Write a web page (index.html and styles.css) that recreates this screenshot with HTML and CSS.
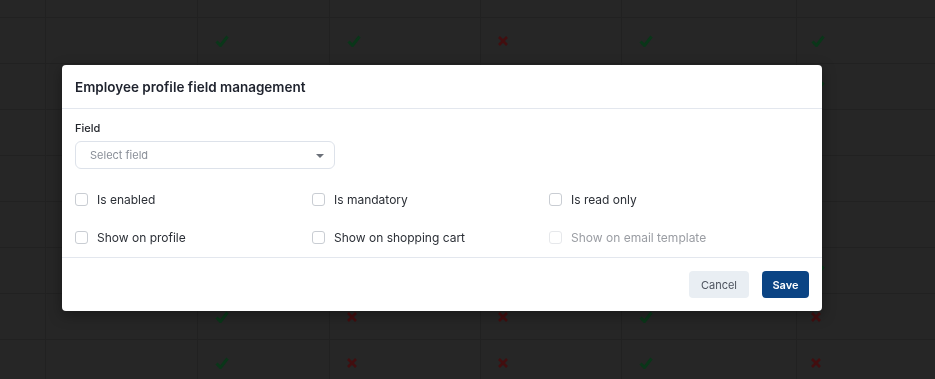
FILE: index.html
```html
<!DOCTYPE html>
<html lang="en">
<head>
    <meta charset="UTF-8">
    <meta name="viewport" content="width=device-width, initial-scale=1.0">
    <title>Employee profile field management</title>
    <link rel="stylesheet" href="styles.css">
</head>
<body>

    <div class="table" id="table">
        <div class="row head">
            <div class="cell c0"></div><div class="cell c1"></div><div class="cell c2"></div><div class="cell c3"></div><div class="cell c4"></div><div class="cell c5"></div><div class="cell c6"></div>
        </div>
    </div>

    <div class="overlay">
        <div class="modal">
            <div class="modal-header">
                <h2>Employee profile field management</h2>
            </div>
            <div class="modal-body">
                <label class="field-label">Field</label>
                <div class="select">
                    <span class="placeholder">Select field</span>
                    <span class="caret"></span>
                </div>
                <div class="options">
                    <label class="option"><span class="box"></span>Is enabled</label>
                    <label class="option"><span class="box"></span>Is mandatory</label>
                    <label class="option"><span class="box"></span>Is read only</label>
                    <label class="option"><span class="box"></span>Show on profile</label>
                    <label class="option"><span class="box"></span>Show on shopping cart</label>
                    <label class="option disabled"><span class="box"></span>Show on email template</label>
                </div>
            </div>
            <div class="modal-footer">
                <button class="btn btn-cancel">Cancel</button>
                <button class="btn btn-save">Save</button>
            </div>
        </div>
    </div>

    <script>
        // 1 = allowed, 0 = not allowed
        const rows = [
            [1, 1, 0, 1, 1],
            [1, 0, 0, 1, 1],
            [1, 0, 0, 1, 0],
            [1, 0, 0, 1, 0],
            [1, 0, 0, 1, 0],
            [1, 0, 0, 1, 1],
            [1, 0, 0, 1, 0],
            [1, 0, 0, 1, 0]
        ];
        const check = '<svg class="yes" width="14" height="12" viewBox="0 0 14 12"><path d="M1.5 6.5 L5.5 10.5 L12.5 1.5" fill="none" stroke="currentColor" stroke-width="3"/></svg>';
        const cross = '<svg class="no" width="10" height="10" viewBox="0 0 10 10"><path d="M1 1 L9 9 M9 1 L1 9" fill="none" stroke="currentColor" stroke-width="2.6"/></svg>';
        const table = document.getElementById('table');
        rows.forEach(function(values) {
            let html = '<div class="cell c0"></div><div class="cell c1"></div>';
            values.forEach(function(v, i) {
                html += '<div class="cell c' + (i + 2) + '">' + (v ? check : cross) + '</div>';
            });
            const row = document.createElement('div');
            row.className = 'row';
            row.innerHTML = html;
            table.appendChild(row);
        });
    </script>

</body>
</html>
```

FILE: styles.css
```css
body {
    margin: 0;
    font-family: 'Inter', 'Liberation Sans', sans-serif;
    background-color: #262626;
    overflow: hidden;
}

/* table behind the dialog */
.row {
    display: flex;
    height: 46px;
    border-bottom: 1px solid #212121;
    box-sizing: border-box;
}

.row.head {
    height: 18px;
}

.cell {
    display: flex;
    align-items: center;
    padding-left: 17px;
    border-right: 1px solid #212121;
    box-sizing: border-box;
}

.c0 { width: 46px; }
.c1 { width: 152px; }
.c2 { width: 132px; }
.c3 { width: 151px; }
.c4 { width: 141px; }
.c5 { width: 175px; }
.c6 { width: 138px; border-right: none; padding-left: 14px; }

.yes {
    color: #0a3619;
}

.no {
    color: #420e0f;
}

/* dialog */
.overlay {
    position: fixed;
    inset: 0;
    padding: 65px 0 0 62px;
}

.modal {
    width: 760px;
    background-color: white;
    border-radius: 4px;
    box-shadow: 0 4px 14px rgba(0, 0, 0, 0.35);
}

.modal-header {
    height: 43px;
    display: flex;
    align-items: center;
    padding: 0 13px;
    border-bottom: 1px solid #e3e7ee;
}

h2 {
    margin: 0;
    font-size: 13.5px;
    font-weight: 600;
    color: #1e222d;
}

.modal-body {
    padding: 13px 13px 1px;
    border-bottom: 1px solid #e3e7ee;
}

.field-label {
    display: block;
    font-size: 11px;
    font-weight: 500;
    color: #22252b;
    line-height: 13px;
    margin-bottom: 6px;
}

.select {
    width: 260px;
    height: 28px;
    box-sizing: border-box;
    border: 1px solid #dde2ea;
    border-radius: 6px;
    display: flex;
    align-items: center;
    justify-content: space-between;
    padding: 0 10px 0 14px;
}

.placeholder {
    font-size: 11px;
    color: #8a8f98;
}

.caret {
    width: 0;
    height: 0;
    border-left: 4px solid transparent;
    border-right: 4px solid transparent;
    border-top: 4px solid #6b7079;
    margin-top: 2px;
}

.options {
    display: grid;
    grid-template-columns: 237px 237px 237px;
    margin-top: 11px;
}

.option {
    display: flex;
    align-items: center;
    height: 38px;
    font-size: 12px;
    color: #2b2f36;
}

.box {
    width: 13px;
    height: 13px;
    box-sizing: border-box;
    border: 1px solid #c9cdd3;
    border-radius: 3px;
    margin-right: 9px;
}

.option.disabled {
    color: #9a9da3;
}

.option.disabled .box {
    border-color: #e6e8eb;
}

.modal-footer {
    display: flex;
    justify-content: flex-end;
    gap: 13px;
    padding: 13px;
}

.btn {
    height: 27px;
    border: none;
    border-radius: 4px;
    font-family: 'Inter', 'Liberation Sans', sans-serif;
    font-size: 11px;
    cursor: pointer;
}

.btn-cancel {
    width: 60px;
    background-color: #e9eef3;
    color: #4d535e;
}

.btn-save {
    width: 47px;
    background-color: #0b4484;
    color: white;
    font-weight: 600;
}
```
